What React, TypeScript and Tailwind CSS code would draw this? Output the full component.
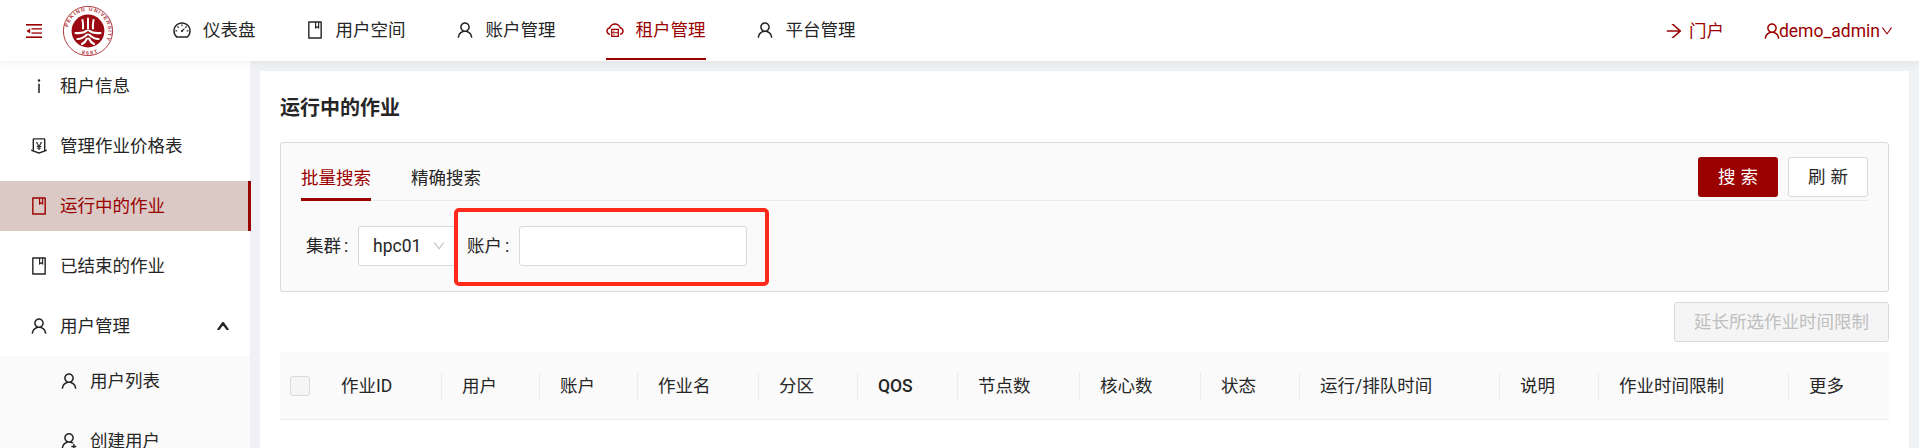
import React from "react";
import {
  AiOutlineDashboard,
  AiOutlineBook,
  AiOutlineUser,
  AiOutlineCloudServer,
  AiOutlineArrowRight,
  AiOutlineDown,
  AiOutlineUp,
  AiOutlineInfo,
  AiOutlineMoneyCollect,
  AiOutlineUserAdd,
} from "react-icons/ai";

const font = { fontFamily: 'Roboto, "Noto Sans CJK SC", sans-serif' };

function Logo() {
  return (
    <svg width="52" height="52" viewBox="0 0 52 52" className="shrink-0">
      <circle cx="26" cy="26" r="24.6" fill="#fff" stroke="#a8262c" strokeWidth="0.9" />
      <defs>
        <path id="ring" d="M 26 26 m -20.2 0 a 20.2 20.2 0 1 1 40.4 0 a 20.2 20.2 0 1 1 -40.4 0" />
      </defs>
      <text fontSize="5.2" fontWeight="700" fill="#b0353a" fontFamily="Liberation Sans, sans-serif" letterSpacing="1">
        <textPath href="#ring" startOffset="3%">PEKING UNIVERSITY</textPath>
        <textPath href="#ring" startOffset="68%">1898</textPath>
      </text>
      <circle cx="26" cy="26" r="16.4" fill="#9b0a12" />
      <g fill="none" stroke="#fff" strokeLinecap="round">
        <path d="M26 13.5 V23.5" strokeWidth="2" />
        <path d="M20.5 15 C21 18 21.5 20.5 21 23.5" strokeWidth="2" />
        <path d="M31.5 15 C31 18 30.5 20.5 31 23.5" strokeWidth="2" />
        <path d="M25 25.5 C22 28 18 28.5 13.5 28" strokeWidth="2.1" />
        <path d="M27 25.5 C30 28 34 28.5 38.5 28" strokeWidth="2.1" />
        <path d="M25 29.5 C22.5 32 19 34 15.5 34" strokeWidth="2.1" />
        <path d="M27 29.5 C29.5 32 33 34 36.5 34" strokeWidth="2.1" />
        <path d="M25 33.5 C24 36 22 38 20 39" strokeWidth="2.1" />
        <path d="M27 33.5 C28 36 30 38 32 39" strokeWidth="2.1" />
      </g>
    </svg>
  );
}

function MenuIcon() {
  return (
    <svg width="16" height="14" viewBox="0 0 16 14" className="ml-[26px] mt-[1px] shrink-0" fill="#9b0000">
      <rect x="0" y="0" width="16" height="1.6" />
      <rect x="5.5" y="4.2" width="10.5" height="1.3" />
      <rect x="5.5" y="8.4" width="10.5" height="1.3" />
      <rect x="0" y="12.4" width="16" height="1.6" />
      <path d="M0.4 6.9 L4.2 4.4 V9.4 Z" />
    </svg>
  );
}

const navItems = [
  { label: "仪表盘", icon: AiOutlineDashboard },
  { label: "用户空间", icon: AiOutlineBook },
  { label: "账户管理", icon: AiOutlineUser },
  { label: "租户管理", icon: AiOutlineCloudServer, active: true },
  { label: "平台管理", icon: AiOutlineUser },
];

function Header() {
  return (
    <header className="relative z-10 flex h-[61px] shrink-0 items-center bg-white shadow-[0_2px_8px_rgba(0,0,0,0.06)]">
      <MenuIcon />
      <div className="ml-[20px]">
        <Logo />
      </div>
      <nav className="ml-[34px] flex h-full">
        {navItems.map((it) => {
          const Icon = it.icon;
          return (
            <div
              key={it.label}
              className={
                it.active
                  ? "mx-[25px] flex h-[60px] items-center gap-[11px] border-b-[2px] border-[#9b0000] pt-[2px] text-[#9b0000]"
                  : "mx-[25px] flex h-[60px] items-center gap-[11px] border-b-[2px] border-transparent pt-[2px] text-[#262626]"
              }
            >
              <Icon size={20} className="-ml-px" />
              <span>{it.label}</span>
            </div>
          );
        })}
      </nav>
      <div className="ml-auto mr-[25px] flex items-center text-[#9b0000]">
        <AiOutlineArrowRight size={20} />
        <span className="ml-[5px]">门户</span>
        <AiOutlineUser className="ml-[38px]" size={20} />
        <span className="-ml-[3px]">demo_admin</span>
        <AiOutlineDown size={14} />
      </div>
    </header>
  );
}

function SideItem({
  icon: Icon,
  label,
  active,
  right,
}: {
  icon: React.ComponentType<{ size?: number; className?: string }>;
  label: string;
  active?: boolean;
  right?: React.ReactNode;
}) {
  return (
    <div
      className={
        active
          ? "relative flex h-[50px] items-center gap-[11px] bg-[#dac9c5] pb-[1px] pl-[29px] text-[#9b0000]"
          : "relative flex h-[50px] items-center gap-[11px] pb-[1px] pl-[29px] text-[#262626]"
      }
    >
      <Icon size={20} className="shrink-0" />
      <span>{label}</span>
      {right}
      {active && <div className="absolute -right-px top-0 h-full w-[3px] bg-[#9b0000]" />}
    </div>
  );
}

function SubItem({
  icon: Icon,
  label,
}: {
  icon: React.ComponentType<{ size?: number; className?: string }>;
  label: string;
}) {
  return (
    <div className="flex h-[50px] items-center gap-[11px] pb-[1px] pl-[59px] text-[#262626]">
      <Icon size={20} className="shrink-0" />
      <span>{label}</span>
    </div>
  );
}

function Sidebar() {
  return (
    <aside className="w-[250px] shrink-0 bg-white">
      <div className="flex flex-col gap-[10px]">
        <SideItem icon={AiOutlineInfo} label="租户信息" />
        <SideItem icon={AiOutlineMoneyCollect} label="管理作业价格表" />
        <SideItem icon={AiOutlineBook} label="运行中的作业" active />
        <SideItem icon={AiOutlineBook} label="已结束的作业" />
        <SideItem
          icon={AiOutlineUser}
          label="用户管理"
          right={<AiOutlineUp size={14} className="absolute right-[20px] top-[18px] stroke-[90]" />}
        />
      </div>
      <div className="mt-[5px] flex flex-col gap-[10px] bg-[#fafafa]">
        <SubItem icon={AiOutlineUser} label="用户列表" />
        <SubItem icon={AiOutlineUserAdd} label="创建用户" />
      </div>
    </aside>
  );
}

const columns = [
  { label: "作业ID", w: "w-[121px]" },
  { label: "用户", w: "w-[98px]" },
  { label: "账户", w: "w-[98px]" },
  { label: "作业名", w: "w-[121px]" },
  { label: "分区", w: "w-[99px]" },
  { label: "QOS", w: "w-[100px]", bold: true },
  { label: "节点数", w: "w-[122px]" },
  { label: "核心数", w: "w-[121px]" },
  { label: "状态", w: "w-[99px]" },
  { label: "运行/排队时间", w: "w-[200px]" },
  { label: "说明", w: "w-[99px]" },
  { label: "作业时间限制", w: "w-[190px]" },
  { label: "更多", w: "flex-1" },
];

function Table() {
  return (
    <div className="mt-[10px] flex h-[68px] items-center border-b border-[#ececec] bg-[#fafafa] text-[#262626]">
      <div className="flex w-[41px] shrink-0 pl-[10px]">
        <div className="h-[20px] w-[20px] rounded-[3px] border border-[#d9d9d9] bg-[#f5f5f5]" />
      </div>
      {columns.map((c, i) => (
        <div key={c.label} className={`relative flex h-full items-center pl-[20px] ${c.w}`}>
          <span className={c.bold ? "font-medium" : ""}>{c.label}</span>
          {i < columns.length - 1 && (
            <div className="absolute right-0 top-[20px] h-[28px] w-px bg-[#ececec]" />
          )}
        </div>
      ))}
    </div>
  );
}

function SearchCard() {
  return (
    <div className="relative mt-[20px] rounded-[3px] border border-[#d9d9d9] bg-[#fafafa] px-[20px] pt-[14px]">
      <div className="flex h-[44px] items-start justify-between border-b border-[#ececec]">
        <div className="flex h-[44px] gap-[40px]">
          <div className="flex h-[44px] items-center border-b-[3px] border-[#9b0000] pt-[1px] text-[#9b0000]">批量搜索</div>
          <div className="flex h-[44px] items-center pb-[2px] text-[#262626]">精确搜索</div>
        </div>
        <div className="flex gap-[10px]">
          <button className="h-[40px] w-[80px] rounded-[3px] bg-[#9b0000] pl-[5px] tracking-[5px] text-white">搜索</button>
          <button className="h-[40px] w-[80px] rounded-[3px] border border-[#d9d9d9] bg-white pl-[5px] tracking-[5px] text-[#262626]">刷新</button>
        </div>
      </div>
      <div className="flex h-[90px] items-start pl-[5px] pt-[25px] text-[#262626]">
        <div className="flex h-[40px] w-[52px] items-center">
          <span>集群</span>
          <span className="ml-[3px]">:</span>
        </div>
        <div className="flex h-[40px] w-[100px] items-center rounded-[3px] border border-[#d9d9d9] bg-white pl-[14px]">
          <span>hpc01</span>
          <AiOutlineDown size={14} className="ml-[11px] shrink-0 text-[#bfbfbf]" />
        </div>
        <div className="ml-[9px] flex h-[40px] w-[52px] items-center">
          <span>账户</span>
          <span className="ml-[3px]">:</span>
        </div>
        <div className="h-[40px] w-[228px] rounded-[3px] border border-[#d9d9d9] bg-white" />
      </div>
      <div className="absolute left-[173px] top-[65px] h-[78px] w-[315px] rounded-[5px] border-[4px] border-[#ff2a1a]" />
    </div>
  );
}

export default function App() {
  return (
    <div style={font} className="flex h-[448px] w-full flex-col overflow-hidden bg-[#f0f1f5] text-[17.5px] leading-[26px]">
      <Header />
      <div className="flex min-h-0 flex-1">
        <Sidebar />
        <main className="ml-[10px] mr-[10px] mt-[10px] flex-1 bg-white px-[20px] pt-[23px]">
          <h1 className="text-[20px] font-bold leading-[28px] text-[#262626]">运行中的作业</h1>
          <SearchCard />
          <div className="mt-[10px] flex justify-end">
            <button className="h-[40px] w-[215px] rounded-[3px] border border-[#d9d9d9] bg-[#f5f5f5] text-[#bfbfbf]">延长所选作业时间限制</button>
          </div>
          <Table />
        </main>
      </div>
    </div>
  );
}
